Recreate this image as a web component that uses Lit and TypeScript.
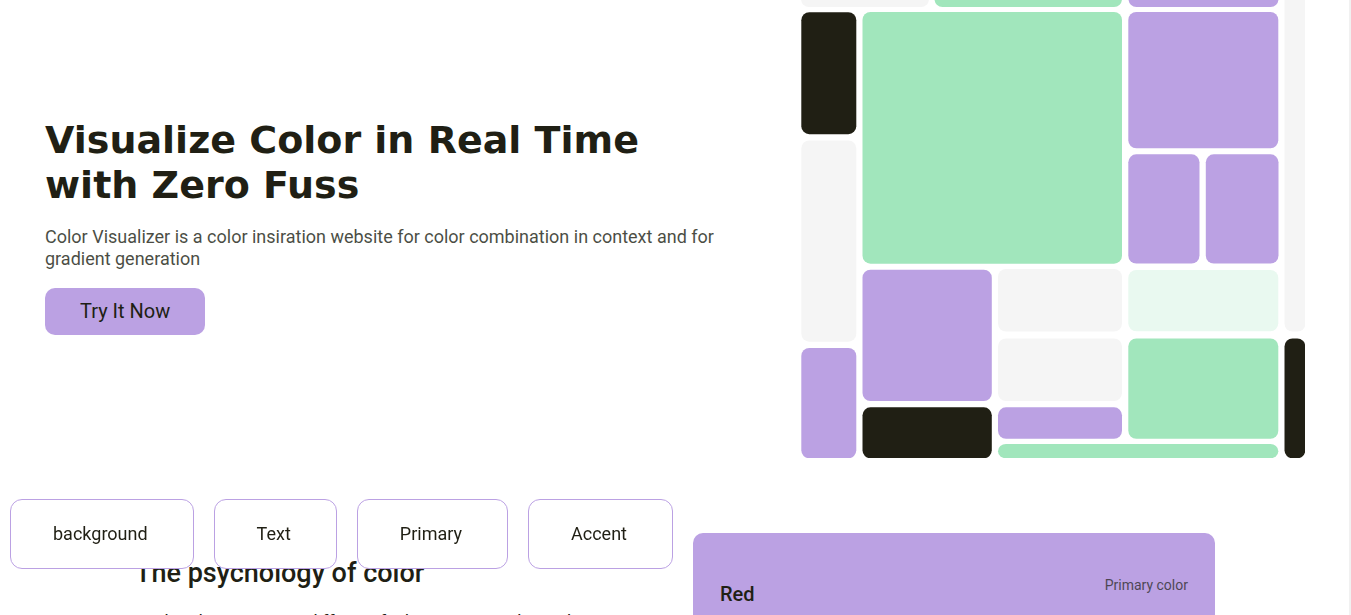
import { LitElement, html, svg, css } from "lit";
import { customElement } from "lit/decorators.js";

type Tile = [x: number, y: number, w: number, h: number, tone: string];

const TILES: Tile[] = [
  [0, -60, 128, 67, "grey"],
  [133.5, -60, 187.5, 67, "accent"],
  [327.5, -60, 150, 67, "primary"],
  [483.5, -60, 21, 391.5, "grey"],
  [0.3, 12.2, 55, 122, "ink"],
  [61.5, 12, 259.5, 251.7, "accent"],
  [327.3, 12, 150, 136.3, "primary"],
  [327.3, 154.3, 71.2, 109.3, "primary"],
  [404.8, 154.3, 72.7, 109.3, "primary"],
  [0.3, 140.5, 55, 201.2, "grey"],
  [0.3, 348, 55, 110.3, "primary"],
  [61.5, 269.7, 129.3, 131.4, "primary"],
  [61.5, 407.3, 129.3, 51, "ink"],
  [197, 269, 124, 62.5, "grey"],
  [197, 338.5, 124, 62.5, "grey"],
  [327.3, 270, 150, 61.3, "mint"],
  [197, 407.3, 124, 31.5, "primary"],
  [327.3, 338.5, 150, 100.3, "accent"],
  [197, 444, 280.3, 14.3, "accent"],
  [483.5, 338.5, 20.8, 119.8, "ink"],
];

@customElement("color-mosaic")
export class ColorMosaic extends LitElement {
  static styles = css`
    :host { display: block; }
    svg { display: block; width: 100%; height: auto; }
    .primary { fill: #bba1e3; }
    .accent { fill: #a1e6bc; }
    .mint { fill: #e9f9f0; }
    .grey { fill: #f5f5f5; }
    .ink { fill: #201f14; }
  `;

  render() {
    return html`<svg viewBox="0 0 504 458" aria-hidden="true">
      ${TILES.map(([x, y, w, h, tone]) =>
        svg`<rect class=${tone} x=${x} y=${y} width=${w} height=${h} rx="8" />`)}
    </svg>`;
  }
}

@customElement("app-root")
export class AppRoot extends LitElement {
  static styles = css`
    :host {
      display: block;
      box-sizing: border-box;
      height: 100vh;
      overflow: hidden;
      border-right: 2px solid #f1f1f1;
      background: #fff;
      color: #201f14;
      font-family: Roboto, "Liberation Sans", sans-serif;
      font-weight: 400;
    }
    * { box-sizing: border-box; }
    h1, h2, h3, p { margin: 0; }
    .hero {
      display: flex;
      justify-content: space-between;
      align-items: center;
      gap: 40px;
      padding: 0 44px 0 45px;
    }
    .copy { flex: 0 1 680px; padding-bottom: 6px; }
    .mosaic { flex: 0 1 504px; }
    h1 {
      font-family: "DejaVu Sans", sans-serif;
      font-size: 38px;
      line-height: 45px;
      font-weight: 700;
    }
    .lead {
      margin-top: 18px;
      font-size: 18px;
      line-height: 22px;
      opacity: 0.8;
    }
    .cta {
      display: block;
      margin-top: 18px;
      padding: 0 35px;
      height: 47px;
      border: 0;
      border-radius: 10px;
      background: #bba1e3;
      color: inherit;
      font: inherit;
      font-size: 20px;
    }
    .swatches {
      position: fixed;
      left: 10px;
      bottom: 46px;
      display: flex;
      gap: 20px;
    }
    .swatch {
      height: 70px;
      padding: 0 45px 2px 42px;
      border: 1px solid #bba1e3;
      border-radius: 12px;
      background: #fff;
      color: inherit;
      font: inherit;
      font-size: 18px;
    }
    .psychology {
      display: flex;
      align-items: flex-start;
      padding: 75px 134px 0 135px;
    }
    .about { flex: 1 1 0; padding: 23px 60px 0 0; }
    h2 { font-size: 27px; line-height: 34px; font-weight: 500; }
    .about p { margin-top: 21px; font-size: 18px; line-height: 22px; }
    .card {
      flex: 0 1 522px;
      display: flex;
      justify-content: space-between;
      align-items: flex-start;
      min-height: 240px;
      padding: 43px 27px;
      border-radius: 10px;
      background: #bba1e3;
    }
    h3 { padding-top: 6px; font-size: 20px; line-height: 24px; font-weight: 500; }
    .role { font-size: 14px; line-height: 18px; opacity: 0.7; }
  `;

  render() {
    return html`
      <section class="hero">
        <div class="copy">
          <h1>Visualize Color in Real Time with Zero Fuss</h1>
          <p class="lead">Color Visualizer is a color insiration website for color combination in context and for gradient generation</p>
          <button class="cta" type="button">Try It Now</button>
        </div>
        <color-mosaic class="mosaic"></color-mosaic>
      </section>
      <section class="psychology">
        <div class="about">
          <h2>The psychology of color</h2>
          <p>Each color generates different feelings to us and our ideas</p>
        </div>
        <article class="card">
          <h3>Red</h3>
          <p class="role">Primary color</p>
        </article>
      </section>
      <nav class="swatches" aria-label="Palette">
        ${["background", "Text", "Primary", "Accent"].map(
          (name) => html`<button class="swatch" type="button">${name}</button>`,
        )}
      </nav>
    `;
  }
}
